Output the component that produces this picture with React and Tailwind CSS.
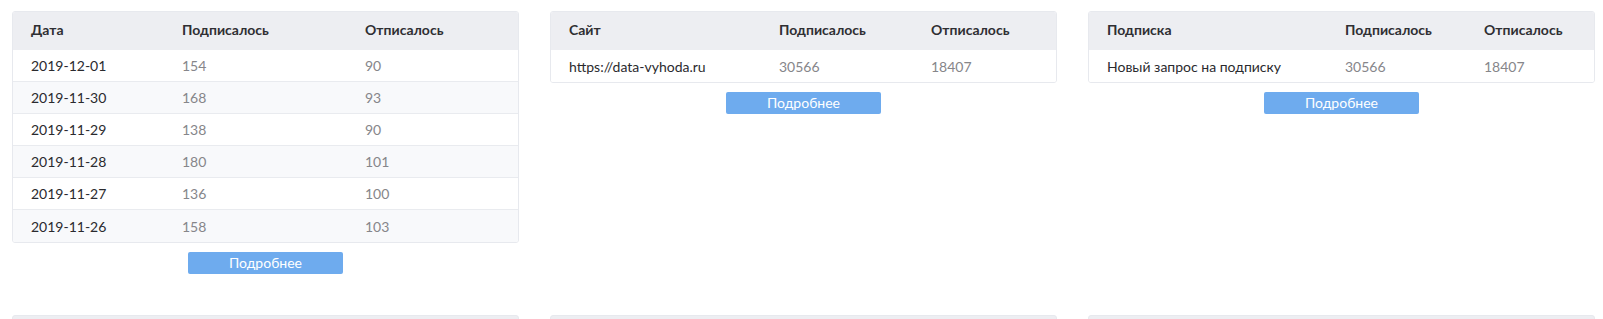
const tables = [
  {
    cols: 'grid-cols-[151px_183px_1fr]',
    head: ['Дата', 'Подписалось', 'Отписалось'],
    rows: [
      ['2019-12-01', '154', '90'],
      ['2019-11-30', '168', '93'],
      ['2019-11-29', '138', '90'],
      ['2019-11-28', '180', '101'],
      ['2019-11-27', '136', '100'],
      ['2019-11-26', '158', '103'],
    ],
  },
  {
    cols: 'grid-cols-[210px_152px_1fr]',
    head: ['Сайт', 'Подписалось', 'Отписалось'],
    rows: [['https://data-vyhoda.ru', '30566', '18407']],
  },
  {
    cols: 'grid-cols-[238px_139px_1fr]',
    head: ['Подписка', 'Подписалось', 'Отписалось'],
    rows: [['Новый запрос на подписку', '30566', '18407']],
  },
]

function StatTable({ cols, head, rows }) {
  return (
    <div className="flex flex-col items-center">
      <div className="w-full overflow-hidden rounded-[3px] border border-[#e7e9ee] bg-white">
        <div className={`grid h-[38px] items-center bg-[#edeef2] pb-[3px] ${cols}`}>
          {head.map((title) => (
            <div key={title} className="pl-[18px] text-[14px] font-bold text-[#2f2f33]">
              {title}
            </div>
          ))}
        </div>
        {rows.map((row, i) => (
          <div
            key={row[0]}
            className={`grid h-[32px] items-center ${cols} ${i % 2 ? 'bg-[#f8f9fb]' : 'bg-white'} ${
              i < rows.length - 1 ? 'border-b border-[#e9ebef]' : ''
            }`}
          >
            <div className="pl-[18px] text-[14px] text-[#2a2a2e]">{row[0]}</div>
            <div className="pl-[18px] text-[14px] text-[#86868a]">{row[1]}</div>
            <div className="pl-[18px] text-[14px] text-[#86868a]">{row[2]}</div>
          </div>
        ))}
      </div>
      <button
        type="button"
        className="mt-[9px] h-[22px] w-[155px] rounded-[2px] bg-[#6eabee] text-[14px] leading-[22px] text-white"
      >
        Подробнее
      </button>
    </div>
  )
}

// следующий ряд таблиц, видна только верхняя кромка
function NextCard() {
  return (
    <div className="h-[40px] rounded-[3px] border border-[#e7e9ee] bg-[#edeef2]" />
  )
}

export default function App() {
  return (
    <div className="h-[319px] overflow-hidden bg-white pt-[11px] pl-[12px] font-['Lato',sans-serif]">
      <div className="grid grid-cols-[507px_507px_507px] items-start gap-x-[31px] gap-y-[41px]">
        {tables.map((t) => (
          <StatTable key={t.head[0]} {...t} />
        ))}
        <NextCard />
        <NextCard />
        <NextCard />
      </div>
    </div>
  )
}
